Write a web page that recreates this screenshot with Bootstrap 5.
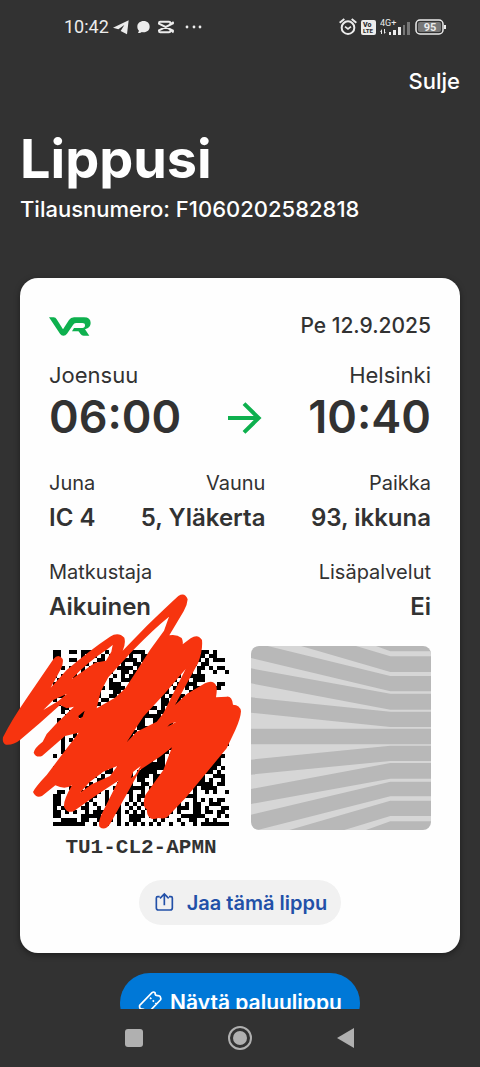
<!DOCTYPE html>
<html lang="fi">
<head>
<meta charset="utf-8">
<meta name="viewport" content="width=device-width, initial-scale=1">
<title>Lippusi</title>
<link href="https://cdn.jsdelivr.net/npm/bootstrap@5.3.0/dist/css/bootstrap.min.css" rel="stylesheet">
<style>
  body { background: #323232; color: #fff; font-family: Inter, "Liberation Sans", sans-serif; }
  .status-bar { height: 54px; padding: 0 33px 0 64px; color: #ececec; font: 400 18px/24px Roboto, sans-serif; }
  .screen { min-height: 0; scrollbar-width: none; padding: 0 20px; }
  .close-link { font-size: 22px; line-height: 28px; font-weight: 500; margin-top: 13px; }
  .page-title { font-size: 54px; line-height: 64px; font-weight: 700; margin: 32px 0 0; }
  .order-no { font-size: 22px; line-height: 28px; font-weight: 500; margin: 4px 0 55px; }
  .ticket { background: #fefefe; color: #323232; border-radius: 18px; padding: 34px 29px 28px; box-shadow: 0 2px 6px #0006; }
  .ticket-date { font-size: 21px; line-height: 28px; font-weight: 500; }
  .route { margin-top: 21px; }
  .station { font-size: 22px; line-height: 28px; }
  .clock { font-size: 45px; line-height: 56px; font-weight: 600; }
  .label { font-size: 20px; line-height: 28px; font-weight: 400; }
  .value { font-size: 24px; line-height: 32px; font-weight: 600; margin: 5px 0 0; }
  .codes { margin-top: 23px; }
  .code-box { width: 184px; padding: 4px 4px 0; }
  .code-box .matrix, .pattern { display: block; width: 100%; }
  .pattern-box { width: 180px; border-radius: 8px; overflow: hidden; }
  .scribble { position: absolute; left: -49px; top: -56px; width: 250px; height: 280px; }
  .code-text { font: 700 21px/28px "Liberation Mono", monospace; margin-top: 4px; }
  .share-row { margin-top: 18px; }
  .btn-share, .btn-return { border: 0; border-radius: 31px; font-weight: 600; line-height: 28px; }
  .btn-share, .btn-share:hover { background: #f1f1f1; color: #2250a8; height: 45px; padding: 0 14px; gap: 10px; font-size: 20px; }
  .btn-return, .btn-return:hover { background: #0078d7; color: #fff; height: 60px; width: 240px; padding: 0; gap: 8px; font-size: 21px; }
  .system-nav { height: 58px; padding: 0 120px; background: #323232; }
  .system-nav .btn { line-height: 0; }
</style>
</head>
<body>
<div class="vh-100 d-flex flex-column">
  <header class="status-bar d-flex align-items-center justify-content-between flex-shrink-0">
    <div class="d-flex align-items-center">
      <span>10:42</span>
      <svg class="ms-1" width="16" height="16" viewBox="0 0 48 48" fill="#ececec"><path d="M0 26 47 4 42 46 23 36 34 18 16 31z"/></svg>
      <svg class="ms-2" width="13" height="14" viewBox="0 0 39 42" fill="#ececec"><path d="M20 3C9 3 1 10 1 20c0 5 2 9 5 12l-3 7c5 1 9-1 11-3 14 3 24-5 24-16C38 10 31 3 20 3z"/></svg>
      <svg class="ms-2" width="16" height="14" viewBox="0 0 48 42" fill="none" stroke="#ececec" stroke-width="6"><path d="M47 6 37 12V8q0-3-4-3H7Q3 5 3 9v2l44 22M47 9 3 31v2q0 4 4 4h26q4 0 4-4v-3l10 7"/></svg>
      <svg class="ms-2" width="22" height="6" viewBox="0 0 22 6" fill="#ececec"><circle cx="5" cy="3" r="1.400"/><circle cx="12" cy="3" r="1.400"/><circle cx="18" cy="3" r="1.400"/></svg>
    </div>
    <div class="d-flex align-items-center">
      <svg width="18" height="18" viewBox="0 0 54 54" fill="none" stroke="#ececec" stroke-width="6"><circle cx="27" cy="29" r="19"/><path d="M2 14 16 3M52 14 38 3"/><path d="m18 26 9 7 9-7" stroke-width="5"/></svg>
      <svg class="ms-1" width="15" height="15" viewBox="0 0 15 15"><rect width="15" height="15" rx="2" fill="#ececec"/><text x="2" y="7" font-family="Roboto" font-size="7" font-weight="900" fill="#323232">Vo</text><text x="2" y="13" font-family="Roboto" font-size="6" font-weight="900" fill="#323232">LTE</text></svg>
      <svg class="ms-1" width="31" height="18" viewBox="0 0 31 18" fill="#ececec"><text x="0" y="8" font-family="Roboto" font-size="9">4G+</text><path d="M0 14l2-3v5H1v-2zM4 11h1v3h1l-2 2z"/><path d="M9 14h2v3H9zM13 12h3v5h-3zM18 9h3v8h-3z"/><path fill="#777" d="M23 7h2v10h-2zM27 4h3v13h-3z"/></svg>
      <svg class="ms-1" width="32" height="16" viewBox="0 0 32 16"><rect x="1" y="1" width="27" height="14" rx="4" fill="none" stroke="#ececec" stroke-width="1.500"/><rect x="3" y="3" width="23" height="10" rx="2" fill="#777"/><path d="M29 6h2v4h-2z" fill="#ececec"/><text x="15" y="12" text-anchor="middle" font-family="Roboto" font-size="11" font-weight="700" fill="#ececec">95</text></svg>
    </div>
  </header>

  <main class="screen flex-grow-1 overflow-auto">
    <div class="d-flex justify-content-end"><a href="#" class="close-link text-white text-decoration-none">Sulje</a></div>
    <h1 class="page-title">Lippusi</h1>
    <p class="order-no">Tilausnumero: F1060202582818</p>

    <section class="ticket">
      <div class="d-flex justify-content-between align-items-center">
        <svg width="42" height="19" viewBox="0 0 126 57" fill="#0eb04e" role="img" aria-label="VR"><path d="M0 1h14q6 0 9 6l19 30 18-28q5-8 15-8h30q20 0 20 17 0 14-17 19l13 19h-17q-6 0-10-6L82 33h18q8 0 8-8 0-7-8-7H81q-6 0-9 6L54 50q-4 6-11 6-6 0-10-6z"/><path d="M75 33h25l-8 10H69z"/></svg>
        <span class="ticket-date">Pe 12.9.2025</span>
      </div>
      <div class="route d-flex justify-content-between align-items-end">
        <div><div class="station">Joensuu</div><div class="clock">06:00</div></div>
        <svg class="mb-2" width="34" height="38" viewBox="0 0 102 114" fill="none" stroke="#0eb04e" stroke-width="12"><path d="M0 57h92M48 14l44 43-44 43"/></svg>
        <div class="text-end"><div class="station">Helsinki</div><div class="clock">10:40</div></div>
      </div>
      <dl class="d-flex justify-content-between mb-0 mt-4">
        <div><dt class="label">Juna</dt><dd class="value">IC 4</dd></div>
        <div class="text-end"><dt class="label">Vaunu</dt><dd class="value">5, Yläkerta</dd></div>
        <div class="text-end"><dt class="label">Paikka</dt><dd class="value">93, ikkuna</dd></div>
      </dl>
      <dl class="d-flex justify-content-between mb-0 mt-4">
        <div><dt class="label">Matkustaja</dt><dd class="value">Aikuinen</dd></div>
        <div class="text-end"><dt class="label">Lisäpalvelut</dt><dd class="value">Ei</dd></div>
      </dl>
      <div class="codes d-flex justify-content-between align-items-start">
        <div class="code-box position-relative">
          <svg class="matrix" viewBox="0 0 44 44" shape-rendering="crispEdges"><path id="modules" fill="#000"/></svg>
          <svg class="scribble" viewBox="0 0 750 840" fill="#f7340f" fill-rule="evenodd" aria-hidden="true"><path d="M9 442Q35 390 80 325L160 208Q175 188 188 207 191 218 183 236L152 293 200 240Q270 180 330 140 355 124 373 143 378 160 368 182L440 108Q500 50 535 18 555 6 563 28 562 45 551 64L508 136Q530 132 545 144 550 154 548 163L572 145Q594 130 606 150 609 180 594 220L525 345 560 312 615 280Q640 268 649 288 652 300 648 322L680 320Q696 318 699 344 720 344 723 364 722 385 706 420L680 475 560 620 505 678Q498 688 475 684 450 694 442 672L440 658Q425 650 436 615L490 540 516 472 480 500 420 540 390 595 330 702Q315 724 299 711 293 700 305 672L355 572 290 615 222 663Q202 672 192 650 190 630 216 586 195 600 166 586L126 618Q108 626 99 606 105 592 140 555L180 502 236 428 195 438 126 498Q108 504 101 488 102 475 128 455L140 432 170 400 222 350 200 355 180 345Q120 400 60 450 40 466 18 464 6 460 9 442ZM215 268Q260 218 322 178L338 165 334 185 318 212 285 218 240 250ZM130 360 160 330 200 312 175 333ZM507 80Q460 118 400 180L325 262 302 305 290 355 345 323 376 295 402 255 450 180 492 122ZM557 237 495 310 430 380 380 457 410 425 470 395 490 370 525 300ZM254 362 235 378 238 386 248 380ZM240 608 270 575 310 545 352 528 330 558 275 583ZM422 528 400 545 392 565 405 555ZM528 396 510 402 502 410 510 406Z"/></svg>
        </div>
        <div class="pattern-box">
          <svg class="pattern" viewBox="30 46 540 552" aria-hidden="true"><path fill="#b8b8b8" d="M30 46h540v552H30z"/><path fill="#d6d6d6" d="M345 46H405L448 62H570V77H448ZM80 46H180L448 124H570V136H448ZM30 82 448 182H570V189H448L30 113ZM30 158 448 237H570V243H448L30 200ZM30 246 448 289H570V294H30ZM30 341H570V345H448L30 387ZM30 432 448 391H570V397H448L30 475ZM30 520 448 444H570V453H448L30 552ZM50 598 448 497H570V510H448L145 598ZM310 598 448 556H570V572H448L375 598Z"/></svg>
        </div>
      </div>
      <div class="code-box code-text text-center p-0">TU1-CL2-APMN</div>
      <div class="share-row d-flex justify-content-center">
        <button type="button" class="btn btn-share d-flex align-items-center"><svg width="24" height="22" viewBox="0 0 72 66" fill="none" stroke="#2250a8" stroke-width="5"><path d="M20 14h-6q-4 0-4 4v30q0 6 6 6h36q6 0 6-6V18q0-4-4-4h-6M34 40V7M21 19 34 6l13 13"/></svg>Jaa tämä lippu</button>
      </div>
    </section>

    <div class="d-flex justify-content-center pt-3 mt-1">
      <button type="button" class="btn btn-return d-flex align-items-center justify-content-center"><svg width="24" height="24" viewBox="0 0 72 72" fill="none" stroke="#fff" stroke-width="5"><path d="M5 43 42 5q5-4 9 0 0 9 8 9 9 0 8 5 3 4 0 8L30 66q-5 4-9 0 2-11-8-12-10 1-8-11zM36 20l4 4m4 4 4 4m4 4 3 3"/></svg>Näytä paluulippu</button>
    </div>
  </main>

  <nav class="system-nav d-flex justify-content-between align-items-center flex-shrink-0" aria-label="Järjestelmä">
    <button type="button" class="btn border-0 p-1" aria-label="Viimeisimmät"><svg width="20" height="20" fill="#b0b0b0"><rect x="1" y="1" width="18" height="18" rx="3"/></svg></button>
    <button type="button" class="btn border-0 p-0" aria-label="Koti"><svg width="26" height="26"><circle cx="13" cy="13" r="11" fill="none" stroke="#b0b0b0" stroke-width="2"/><circle cx="13" cy="13" r="7" fill="#b0b0b0"/></svg></button>
    <button type="button" class="btn border-0 p-1" aria-label="Takaisin"><svg width="20" height="22" fill="#b0b0b0"><path d="M1 11 18 1v20z"/></svg></button>
  </nav>
</div>
<script src="https://cdn.jsdelivr.net/npm/bootstrap@5.3.0/dist/js/bootstrap.bundle.min.js"></script>
<script>
  // One string per module row; "#" is a dark module.
  const rows = [
    "##..##.#####.#..#..####...##.#..#..#.##.#...",
    "##.....#.##.#.#....#..##.#..##.#.#..##.##...",
    "##..##.##..##..#.####.#.#.##..#.##.##.#.###.",
    "#.......#.#..#...#..##.#..#.#..#...#.##.....",
    "..#.##.#.##..#..####.#.#.##.#..##.#.##.#.##.",
    "#......##.##..#..##.#..#..#.##...##.#...#..#",
    "#.#.##.#.#.##..#.#.##.##.#..#.##..####......",
    ".##..#####..#.#..###..#.#.##..#..#.###......",
    "#.#.##..#.##..###..#.#..#.#.##.#####.....##.",
    ".#.##.#..#.##.####.#..##.#.##.##.#.##...##..",
    "#.#..##.##.#...##.#.#..##.###..#..#.#.......",
    ".##.#..#.#.#..##.##.##.#..##.#.##..##.#.....",
    "#..##.##.##.##..##.#.#..##.##..#.##.#..##...",
    ".#.#.##..#.#..####.#..###..##.##.#..##.#....",
    "..##..#.##..#.##..#.##..##.#...#..#.##..####",
    "..#.#..####.#..##.#.#.##..###.#..##.##.#..##",
    "...##.##..#.##..##.#..#####..##.##.#..##.###",
    ".#..#..####.#.#..#.#.##..####..#..##.#..####",
    ".#.##.#.##..#..##.#..##..#####..#..#.##..#.#",
    "..##.##.#.##..##..##.###...##..##.#..#.##.##",
    "....##.###.#..#.##.##..####..#.#..#..##.#..#",
    "..#..#.##..##.#.#.##.#....##.###.##..#.#..##",
    "..#.#..#.#.##..##.##.###...#.###..##..##...#",
    "..#..#..##.#.##..#.##..#.##..#.##..##.#....#",
    "..#.....##..#.##.#.#.##.###..##..#.#.##.....",
    "..##.#.##.#..##.#.##..##.#.##..##..##..##...",
    "#..#..##..#.##..##.#.##..###.#..#.##..##.##.",
    "..##.#..##.#..##.#.#.####.##..#.##..#.####..",
    ".#..##.###..##.#.##.##.#####.##..#.##.####..",
    "#.##.#..##.#..#.##.#..######..##.##..####.#.",
    "..#.##.#####.##..#.#.#####..##.#..######.#..",
    ".#..#..####.#..##.##.###.##.#..##.####..###.",
    "#.##.#.##..##.##..##.##..##..#.#..####.#..#.",
    "..#..###.#..##..##.#..##.##.##.##.######.##.",
    "....##..#......#...####.#..#.#..##.#.####...",
    ".##..#.#..##.#..#.##..#.#.#..#.##..#..#.#..#",
    "##.....#.##..#.##..#.##..#.##..#####........",
    "##.......#...#.##..#.#.#.#...#.#...#.#.#.##.",
    "##...#..#.#..#.##.#.#.#..##..#.#.#.##..###..",
    "#.##...##..#..###..#.#.#.#..#..###.##.#...##",
    "##.#.#..#.####.##.#.#.#....#.#.#...##.##.##.",
    "##.....#####.#..#..####.#..##...######...#.#",
    "..####.##..#.##.#..###...#.#...#..##..#.#...",
    "########..#.##..#.#.#.#.#.#..#..#..#.#######"
  ];
  let d = "";
  rows.forEach((row, y) => { for (const m of row.matchAll(/#+/g)) d += `M${m.index} ${y}h${m[0].length}v1h-${m[0].length}z`; });
  document.getElementById("modules").setAttribute("d", d);
</script>
</body>
</html>
